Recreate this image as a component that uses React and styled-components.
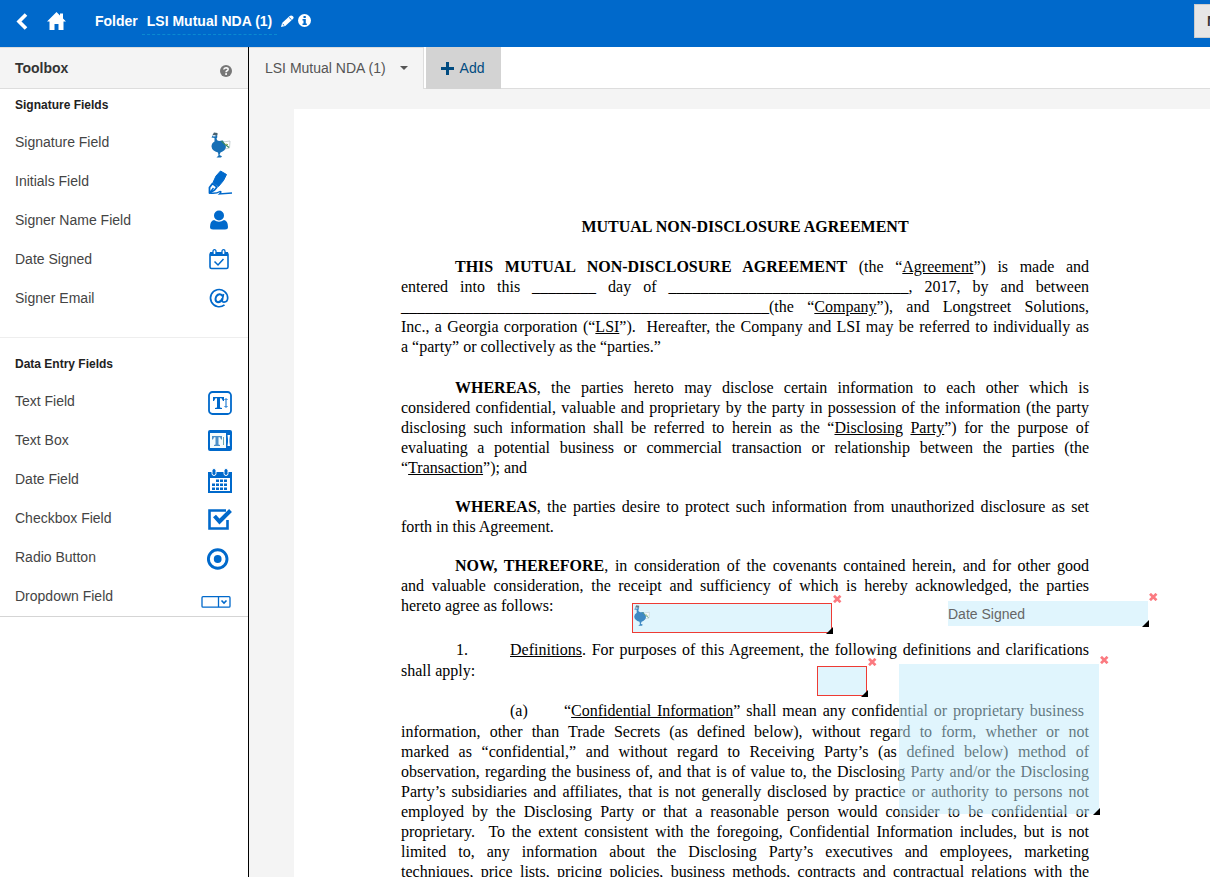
import React from "react";
import styled, { createGlobalStyle, css } from "styled-components";

const BLUE = "#0069cb";

const Global = createGlobalStyle`
  * { box-sizing: border-box; }
  html, body { margin: 0; }
  body { font: 14px/20px "Liberation Sans", Arial, sans-serif; color: #444; background: #fff; }
  button, a { font: inherit; color: inherit; text-decoration: none; }
  button { border: 0; padding: 0; margin: 0; background: none; cursor: pointer; }
  svg { display: block; flex: none; }
`;

const AppFrame = styled.div`
  display: flex;
  flex-direction: column;
  height: 100vh;
  overflow: hidden;
`;

const TopBar = styled.header`
  display: flex;
  align-items: flex-start;
  flex: none;
  height: 47px;
  padding-left: 16px;
  background: ${BLUE};
  color: #fff;
  overflow: hidden;
`;

const NavLink = styled.a`
  display: block;
  margin-top: 11px;
  margin-right: ${(p) => p.$gap}px;
`;

const FolderTitle = styled.h1`
  display: flex;
  align-items: flex-start;
  margin: 0 4px 0 0;
  font-size: 14px;
  line-height: 22px;
  padding-top: 10px;
`;

const FolderName = styled.button`
  margin-left: 4px;
  padding: 0 5px 2px;
  font-weight: bold;
  line-height: 22px;
  border-bottom: 1px dashed #0a8bd0;
`;

const IconButton = styled.button`
  margin: ${(p) => p.$top}px 4px 0 0;
`;

const NextButton = styled.button`
  flex: none;
  width: 60px;
  height: 34px;
  margin: 4px -44px 0 auto;
  padding-left: 12px;
  border: 1px solid #ccc;
  background: #e6e6e6;
  color: #333;
  font-weight: bold;
  text-align: left;
`;

const Workspace = styled.div`
  display: flex;
  flex: 1;
  min-height: 0;
`;

const Sidebar = styled.aside`
  flex: none;
  width: 249px;
  border-right: 1px solid #000;
  background: #fff;
`;

const SidebarHead = styled.div`
  display: flex;
  align-items: center;
  justify-content: space-between;
  height: 42px;
  padding: 0 16px 0 15px;
  border-top: 1px solid #ddd;
  border-bottom: 1px solid #ddd;
  background: #f4f4f4;
`;

const ToolboxTitle = styled.h2`
  margin: 0;
  font-size: 14px;
  color: #333;
`;

const HelpButton = styled.button`
  padding-top: 6px;
`;

const Section = styled.section`
  padding: ${(p) => (p.$spaced ? "10px 0 0" : "0 0 19px")};
  border-bottom: 1px solid ${(p) => (p.$spaced ? "#d5d5d5" : "#eee")};
`;

const SectionTitle = styled.h3`
  height: 34px;
  margin: 0;
  padding-left: 15px;
  font-size: 12px;
  line-height: 32px;
  color: #222;
`;

const FieldRow = styled.button`
  display: flex;
  justify-content: space-between;
  width: 100%;
  height: 39px;
  padding: 0 15px;
  line-height: 38px;
  text-align: left;
`;

const Main = styled.main`
  display: flex;
  flex-direction: column;
  flex: 1;
  min-width: 0;
  background: #f4f4f4;
`;

const Tabs = styled.nav`
  display: flex;
  flex: none;
  height: 42px;
  background: #fff;
  box-shadow: inset 0 -1px #ddd;
`;

const DocTab = styled.button`
  display: flex;
  align-items: center;
  gap: 14px;
  padding: 0 15px 1px 16px;
  margin-right: 2px;
  border-top: 1px solid #ddd;
  border-right: 1px solid #ddd;
  background: #f4f4f4;
  color: #555;
`;

const AddTab = styled.button`
  display: flex;
  align-items: center;
  gap: 6px;
  padding: 0 16px 0 15px;
  background: #d3d3d3;
  color: #004b80;
`;

const Scroller = styled.div`
  flex: 1;
  min-height: 0;
  padding: 20px 0 0 45px;
  overflow: auto;
  scrollbar-width: none;
`;

const Page = styled.article`
  position: relative;
  padding: 108px 121px 40px 107px;
  background: #fff;
  color: #000;
  font: 16px/20px "Liberation Serif", "Times New Roman", serif;
`;

const DocTitle = styled.h4`
  margin: 0 0 20px;
  font-size: 16px;
  line-height: 20px;
  text-align: center;
`;

const Para = styled.p`
  margin: 0 0 ${(p) => p.$after}px;
`;

const Line = styled.span`
  display: block;
  padding-left: ${(p) => p.$indent || 0}px;
  text-align: justify;
  text-align-last: ${(p) => (p.$last ? "left" : "justify")};
`;

const NumberedLine = styled.span`
  display: grid;
  grid-template-columns: 54px 1fr;
  padding-left: ${(p) => p.$indent}px;
  padding-right: ${(p) => p.$inset || 0}px;
  padding-bottom: 1px;
  & > :last-child { text-align-last: justify; }
`;

const PlacedField = styled.div`
  position: absolute;
  left: ${(p) => p.$x}px;
  top: ${(p) => p.$y}px;
  width: ${(p) => p.$w}px;
  height: ${(p) => p.$h}px;
  background: rgba(194, 236, 252, 0.5);
  font: 14px/26px "Liberation Sans", Arial, sans-serif;
  color: #666;
  ${(p) => p.$required && css`border: 1px solid #ee3b34;`}
`;

const RemoveButton = styled.button`
  position: absolute;
  top: ${(p) => (p.$inset ? -9 : -8)}px;
  right: ${(p) => (p.$inset ? -11 : -10)}px;
`;

const ResizeHandle = styled.span`
  position: absolute;
  right: ${(p) => (p.$inset ? -2 : -1)}px;
  bottom: ${(p) => (p.$inset ? -2 : -1)}px;
  width: 7px;
  height: 7px;
  background: #000;
  clip-path: polygon(100% 0, 100% 100%, 0 100%);
`;

function Goose({ soft }) {
  return (
    <g opacity={soft ? 0.8 : 1}>
      <path d="M13 10 L20 9 L19.500 16 L15 17" fill="#fff" stroke="#b9c5c9" strokeWidth="0.8" />
      <path d="M3 3 Q4 1 6.500 2.500 Q8 4.500 6.500 6.500 Q6.500 8.500 9 9 L13 8.500 Q13.500 11 15.500 12.500 Q17 17 12.500 19.500 L10.500 20.500 L9.500 23 L12 24.300 L11 25.500 L6.500 25.500 L8.500 23.500 L8 20.500 Q2 19 1.500 14.500 Q1.500 11 4.500 9.500 L4.500 6 L1.500 5.500 Z" fill="#176fb5" />
      <path d="M2.500 3 L4 0.500 L7.500 1 L7.500 3.500 Z" fill="#47606e" />
      <path d="M3 3.800 H5.500" stroke="#fff" strokeWidth="1.200" />
      <path d="M11.500 9 L14 11.500 L19 15.500" fill="none" stroke="#3a8a64" strokeWidth="1.200" />
      <path d="M15 13 L17 12 L18 13" fill="none" stroke="#8fa65a" strokeWidth="1" />
    </g>
  );
}

const at = (x, y, children) => <g transform={`translate(${x} ${y})`}>{children}</g>;

const icons = {
  signature: at(9, 9, <Goose />),
  initials: at(7, 9, (
    <>
      <path d="M12.500 0 L18.500 3.500 L15.500 9.500 L10.500 15.500 L5 11.500 L8 5 Z" fill={BLUE} stroke={BLUE} strokeLinejoin="round" />
      <path d="M4.500 12.500 L9 16 L6.500 19 L1.500 22 L1.500 16.500 Z" fill="#fff" stroke={BLUE} strokeWidth="1.800" strokeLinejoin="round" />
      <path d="M1.500 22 L5.500 17 M1.500 22 Q8 23 12 20.500 Q14 20.500 11.500 23 L24 22" fill="none" stroke={BLUE} strokeWidth="1.400" />
    </>
  )),
  name: at(9, 9, (
    <>
      <circle cx="9" cy="5.500" r="5" fill={BLUE} />
      <path d="M4 10 Q9 13.500 14 10 Q18 11 18 17 Q18 19.500 15 19.500 H3 Q0 19.500 0 17 Q0 11 4 10 Z" fill={BLUE} />
    </>
  )),
  dateSigned: at(8, 9, (
    <>
      <rect x="1" y="4" width="18" height="15.500" rx="1.500" fill="#fff" stroke={BLUE} strokeWidth="1.600" />
      <path d="M1 3 H19 V7 H1 Z" fill={BLUE} />
      <g fill="#fff" stroke={BLUE} strokeWidth="1.300">
        <rect x="4" y="0.700" width="3" height="5" rx="1.500" />
        <rect x="13" y="0.700" width="3" height="5" rx="1.500" />
      </g>
      <path d="M5.500 12.500 L9 16 L14.500 10" fill="none" stroke={BLUE} strokeWidth="1.500" />
    </>
  )),
  email: at(9, 10, (
    <g fill="none" stroke={BLUE}>
      <path d="M14.500 15.800 A8.600 8.600 0 1 1 17.700 9 Q17.500 13 14 13.200 Q11.800 13.200 12.300 10.800 L13.500 5" strokeWidth="1.700" />
      <path d="M12.800 7.500 Q11.800 5 9.500 5.200 Q6 5.700 5.500 10 Q5.500 13 8 13.200 Q11 13.200 12.500 9.500" strokeWidth="2" />
    </g>
  )),
  text: at(7, 9, (
    <>
      <rect x="1" y="1" width="22" height="22" rx="3.500" fill="#fff" stroke={BLUE} strokeWidth="1.800" />
      <path d="M5 6 H16 V10 H15 L13.500 7.300 H12 V16.500 L14 17 V18 H7 V17 L9 16.500 V7.300 H7.500 L6 10 H5 Z" fill={BLUE} />
      <path d="M18 8 V16 M16.500 9 L18 7.500 L19.500 9 M16.500 15 L18 16.500 L19.500 15" fill="none" stroke={BLUE} />
    </>
  )),
  box: at(7, 9, (
    <>
      <rect x="0" y="0" width="24" height="21" rx="2" fill={BLUE} />
      <rect x="2" y="3" width="16" height="15" fill="#f4fbfc" />
      <path d="M4 6 H14 V9.500 H13 L12 7.300 H10.500 V14.500 L12 15 V16 H6 V15 L7.500 14.500 V7.300 H6 L5 9.500 H4 Z" fill="#4b8fc7" />
      <path d="M15.500 7 V15" stroke="#6aa5ab" />
      <path d="M19.500 5 H22 L21.500 9 V12 L22 16 H19.500 L20 12 V9 Z" fill="#fff" />
    </>
  )),
  date: at(7, 9, (
    <>
      <path d="M0 3 H24 V24 H0 Z" fill={BLUE} />
      <path d="M2 9 H22 V22 H2 Z" fill="#fff" />
      <g fill={BLUE} stroke="#fff" strokeWidth="1">
        <rect x="4" y="-0.500" width="4" height="7" rx="2" />
        <rect x="16" y="-0.500" width="4" height="7" rx="2" />
      </g>
      <g fill={BLUE}>
        {[10.500, 14.500, 18.500].map((y, row) =>
          [4, 8, 12, 16].map((x, col) =>
            row === 0 && col === 0 ? null : <rect key={`${x}-${y}`} x={x} y={y} width="3" height="2.500" />
          )
        )}
      </g>
    </>
  )),
  checkbox: at(7, 10, (
    <>
      <path d="M18 1.500 H1.500 V19.500 H19.500 V11" fill="none" stroke={BLUE} strokeWidth="2.600" />
      <path d="M6.500 7 L11.500 12.500 L22.500 1.500" fill="none" stroke={BLUE} strokeWidth="4" />
    </>
  )),
  radio: at(6, 9, (
    <>
      <circle cx="10.700" cy="12" r="9.300" fill="none" stroke={BLUE} strokeWidth="2.900" />
      <circle cx="10.700" cy="12" r="3.900" fill={BLUE} />
    </>
  )),
  dropdown: at(0, 19, (
    <g fill="none" stroke={BLUE} strokeWidth="1.300">
      <rect x="1" y="0.700" width="28" height="10.500" rx="1" />
      <path d="M17.500 0.700 V11" />
      <path d="M20.500 4.500 L23 7 L25.500 4.500" strokeWidth="1.600" />
    </g>
  )),
};

const signatureFields = [
  ["signature", "Signature Field"],
  ["initials", "Initials Field"],
  ["name", "Signer Name Field"],
  ["dateSigned", "Date Signed"],
  ["email", "Signer Email"],
];

const dataFields = [
  ["text", "Text Field"],
  ["box", "Text Box"],
  ["date", "Date Field"],
  ["checkbox", "Checkbox Field"],
  ["radio", "Radio Button"],
  ["dropdown", "Dropdown Field"],
];

function ToolSection({ title, fields, spaced }) {
  return (
    <Section $spaced={spaced}>
      <SectionTitle>{title}</SectionTitle>
      {fields.map(([icon, label]) => (
        <FieldRow key={icon} type="button">
          {label}
          <svg width="32" height="39" viewBox="0 0 32 39" aria-hidden="true">{icons[icon]}</svg>
        </FieldRow>
      ))}
    </Section>
  );
}

function DocField({ x, y, w, h, required, label, children }) {
  return (
    <PlacedField $x={x} $y={y} $w={w} $h={h} $required={required} role="group" aria-label={label}>
      {children}
      <RemoveButton $inset={required} type="button" aria-label={`Remove ${label}`}>
        <svg width="9" height="8" viewBox="0 0 9 8"><path d="M1 0.800 L7.500 7.200 M7.500 0.800 L1 7.200" stroke="#fb7a80" strokeWidth="2.700" /></svg>
      </RemoveButton>
      <ResizeHandle $inset={required} />
    </PlacedField>
  );
}

export default function App() {
  return (
    <AppFrame>
      <Global />
      <TopBar>
        <NavLink href="#back" aria-label="Back" $gap={19}>
          <svg width="12" height="20" viewBox="0 0 12 20"><path d="M10 3.500 L3 10.500 L10 17.500" fill="none" stroke="#fff" strokeWidth="3.600" /></svg>
        </NavLink>
        <NavLink href="#home" aria-label="Home" $gap={29}>
          <svg width="19" height="20" viewBox="0 0 19 20"><path d="M9.500 1 L13 4.500 V2.500 H16 V7.500 L19 10.500 H16.500 V19 H11.500 V13 H7.500 V19 H2.500 V10.500 H0 Z" fill="#fff" /></svg>
        </NavLink>
        <FolderTitle>
          Folder
          <FolderName type="button">LSI Mutual NDA (1)</FolderName>
        </FolderTitle>
        <IconButton type="button" aria-label="Rename" $top={15}>
          <svg width="13" height="12" viewBox="0 0 12 12" preserveAspectRatio="none">
            <path d="M0 12 L1 8 L8 1 Q9.500 0 11 1.200 Q12.300 2.500 11 4 L4 11 Z" fill="#fff" />
            <path d="M7.500 2.500 L9.700 4.700 M1.500 9 L3 10.500" stroke={BLUE} strokeWidth="0.900" />
          </svg>
        </IconButton>
        <IconButton type="button" aria-label="Folder details" $top={14}>
          <svg width="13" height="13" viewBox="0 0 13 13">
            <circle cx="6.500" cy="6.500" r="6.500" fill="#fff" />
            <path d="M5.500 2 H7.800 V4 H5.500 Z M4.500 5 H7.800 V9.500 H8.800 V11 H4.500 V9.500 H5.500 V6.500 H4.500 Z" fill={BLUE} />
          </svg>
        </IconButton>
        <NextButton type="button">Next</NextButton>
      </TopBar>
      <Workspace>
        <Sidebar>
          <SidebarHead>
            <ToolboxTitle>Toolbox</ToolboxTitle>
            <HelpButton type="button" aria-label="Help">
              <svg width="12" height="12" viewBox="0 0 12 12">
                <circle cx="6" cy="6" r="6" fill="#777" />
                <path d="M3.800 4.500 Q4 2.700 6 2.700 Q8.200 2.800 8.100 4.500 Q8 5.500 6.800 6 Q6.100 6.400 6.100 7.200" fill="none" stroke="#fff" strokeWidth="1.600" />
                <rect x="5.200" y="8.200" width="1.800" height="1.700" fill="#fff" />
              </svg>
            </HelpButton>
          </SidebarHead>
          <ToolSection title="Signature Fields" fields={signatureFields} />
          <ToolSection title="Data Entry Fields" fields={dataFields} spaced />
        </Sidebar>
        <Main>
          <Tabs>
            <DocTab type="button">
              LSI Mutual NDA (1)
              <svg width="8" height="4" viewBox="0 0 8 4"><path d="M0 0 H8 L4 4 Z" fill="#555" /></svg>
            </DocTab>
            <AddTab type="button">
              <svg width="13" height="13" viewBox="0 0 13 13"><path d="M5 0 H8 V5 H13 V8 H8 V13 H5 V8 H0 V5 H5 Z" fill="#004b80" /></svg>
              Add
            </AddTab>
          </Tabs>
          <Scroller>
            <Page>
              <DocTitle>MUTUAL NON-DISCLOSURE AGREEMENT</DocTitle>
              <Para $after={21}>
                <Line $indent={54}><b>THIS MUTUAL NON-DISCLOSURE AGREEMENT</b> (the “<u>Agreement</u>”) is made and</Line>
                <Line>entered into this ________ day of ______________________________, 2017, by and between</Line>
                <Line>______________________________________________(the “<u>Company</u>”), and Longstreet Solutions,</Line>
                <Line>Inc., a Georgia corporation (“<u>LSI</u>”).&nbsp; Hereafter, the Company and LSI may be referred to individually as</Line>
                <Line $last>a “party” or collectively as the “parties.”</Line>
              </Para>
              <Para $after={19}>
                <Line $indent={54}><b>WHEREAS</b>, the parties hereto may disclose certain information to each other which is</Line>
                <Line>considered confidential, valuable and proprietary by the party in possession of the information (the party</Line>
                <Line>disclosing such information shall be referred to herein as the “<u>Disclosing</u> <u>Party</u>”) for the purpose of</Line>
                <Line>evaluating a potential business or commercial transaction or relationship between the parties (the</Line>
                <Line $last>“<u>Transaction</u>”); and</Line>
              </Para>
              <Para $after={19}>
                <Line $indent={54}><b>WHEREAS</b>, the parties desire to protect such information from unauthorized disclosure as set</Line>
                <Line $last>forth in this Agreement.</Line>
              </Para>
              <Para $after={24}>
                <Line $indent={54}><b>NOW, THEREFORE</b>, in consideration of the covenants contained herein, and for other good</Line>
                <Line>and valuable consideration, the receipt and sufficiency of which is hereby acknowledged, the parties</Line>
                <Line $last>hereto agree as follows:</Line>
              </Para>
              <Para $after={20}>
                <NumberedLine $indent={55}>
                  <span>1.</span>
                  <span><u>Definitions</u>. For purposes of this Agreement, the following definitions and clarifications</span>
                </NumberedLine>
                <Line $last>shall apply:</Line>
              </Para>
              <Para $after={20}>
                <NumberedLine $indent={109} $inset={5}>
                  <span>(a)</span>
                  <span>“<u>Confidential Information</u>” shall mean any confidential or proprietary business</span>
                </NumberedLine>
                <Line>information, other than Trade Secrets (as defined below), without regard to form, whether or not</Line>
                <Line>marked as “confidential,” and without regard to Receiving Party’s (as defined below) method of</Line>
                <Line>observation, regarding the business of, and that is of value to, the Disclosing Party and/or the Disclosing</Line>
                <Line>Party’s subsidiaries and affiliates, that is not generally disclosed by practice or authority to persons not</Line>
                <Line>employed by the Disclosing Party or that a reasonable person would consider to be confidential or</Line>
                <Line>proprietary.&nbsp; To the extent consistent with the foregoing, Confidential Information includes, but is not</Line>
                <Line>limited to, any information about the Disclosing Party’s executives and employees, marketing</Line>
                <Line>techniques, price lists, pricing policies, business methods, contracts and contractual relations with the</Line>
              </Para>

              <DocField x={338} y={494} w={200} h={30} required label="Signature field">
                <svg width="18" height="24" viewBox="0 -1 22 29"><Goose soft /></svg>
              </DocField>
              <DocField x={654} y={492} w={200} h={25} label="Date signed field">Date Signed</DocField>
              <DocField x={523} y={557} w={50} h={30} required label="Initials field" />
              <DocField x={605} y={555} w={200} h={150} label="Text box field" />
            </Page>
          </Scroller>
        </Main>
      </Workspace>
    </AppFrame>
  );
}
